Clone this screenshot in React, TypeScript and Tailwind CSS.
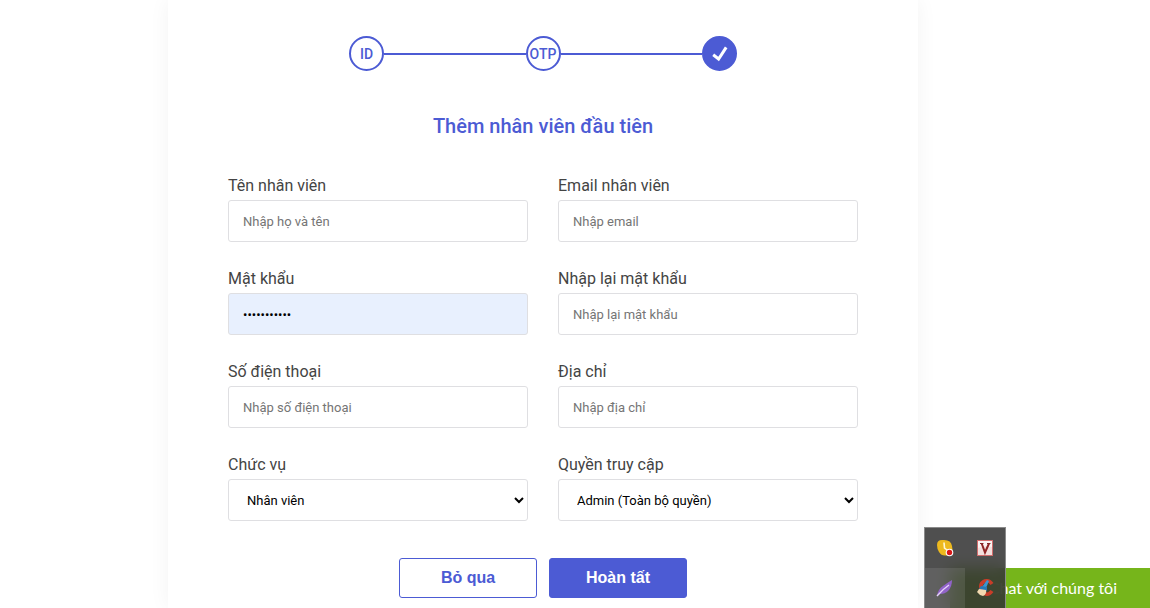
import { useState } from "react";

const inputClass =
  "h-[42px] w-full rounded-[3px] border border-[#dfdfe2] px-[14px] text-[13px] text-black placeholder:text-[#757575] focus:outline-none focus:border-[#4c5bd4]";

const labelClass = "mb-0.5 block text-base leading-6 text-[#444]";

const fields = [
  { id: "name", label: "Tên nhân viên", placeholder: "Nhập họ và tên", type: "text" },
  { id: "email", label: "Email nhân viên", placeholder: "Nhập email", type: "email" },
  { id: "password", label: "Mật khẩu", placeholder: "Nhập mật khẩu", type: "password" },
  { id: "confirm", label: "Nhập lại mật khẩu", placeholder: "Nhập lại mật khẩu", type: "password" },
  { id: "phone", label: "Số điện thoại", placeholder: "Nhập số điện thoại", type: "tel" },
  { id: "address", label: "Địa chỉ", placeholder: "Nhập địa chỉ", type: "text" },
];

const selects = [
  { id: "position", label: "Chức vụ", options: ["Nhân viên"] },
  { id: "role", label: "Quyền truy cập", options: ["Admin (Toàn bộ quyền)"] },
];

function Steps() {
  const circle =
    "flex size-[35px] shrink-0 items-center justify-center rounded-full border-2 border-[#4c5bd4] text-sm font-medium";
  return (
    <div className="mx-auto flex w-full max-w-[388px] items-center text-[#4c5bd4]">
      <div className={circle}>ID</div>
      <div className="h-0.5 flex-1 bg-[#4c5bd4]" />
      <div className={circle}>OTP</div>
      <div className="h-0.5 flex-1 bg-[#4c5bd4]" />
      <div className={`${circle} bg-[#4c5bd4]`}>
        <svg viewBox="0 0 16 16" className="size-4" fill="none" stroke="white" strokeWidth="3">
          <path d="M1.2 8.8 L6.6 13 L14.2 1.4" />
        </svg>
      </div>
    </div>
  );
}

function Tray() {
  return (
    <div className="fixed right-36 bottom-0 grid h-[81px] w-[82px] grid-cols-2 grid-rows-2 border border-b-0 border-[#8a8a8a] bg-[#323232]/86 backdrop-blur-sm">
      <div className="flex items-center justify-center">
        <svg viewBox="0 0 18 18" className="size-[18px]">
          <path
            d="M1 6 Q1 1 6 1 Q15 0 16 7 Q18 16 12 16 Q6 18 3 13 Q1 10 1 6Z"
            fill="#edb91e"
          />
          <path d="M8 3.5 L8.5 9 L11 11" fill="none" stroke="#fff7d5" strokeWidth="1.6" />
          <circle cx="13.5" cy="13.5" r="3.8" fill="#fff" />
          <circle cx="13.5" cy="13.5" r="2.7" fill="#d91818" />
        </svg>
      </div>
      <div className="flex items-center justify-center">
        <svg viewBox="0 0 16 16" className="size-4">
          <rect x="0.5" y="0.5" width="15" height="15" fill="#f3dfdd" stroke="#cf6c6c" />
          <path d="M1 1 H15 V7 Q8 5 1 8Z" fill="#fff" opacity="0.6" />
          <path d="M3 3.5 H6.5 M10 3.5 H13.5" stroke="#7d2929" strokeWidth="1" />
          <path d="M4.7 3.5 L8 12.5 L12 3.5" fill="none" stroke="#8f2424" strokeWidth="2" />
        </svg>
      </div>
      <div className="flex items-center justify-center bg-white/10">
        <svg viewBox="0 0 18 18" className="size-[18px]">
          <path d="M1 17 Q2 10 7 7 Q11 4 16 1 Q16 8 12 12 Q9 15 4 15Z" fill="#9163c9" />
          <path d="M1 17 Q7 10 13 6" fill="none" stroke="#e6d3fa" strokeWidth="1.4" />
        </svg>
      </div>
      <div className="flex items-center justify-center">
        <svg viewBox="0 0 18 18" className="size-[18px]">
          <path
            d="M16 5 Q13 1 9 2 Q4 4 5 9 Q6 15 10 15 Q13 16 16 12"
            fill="none"
            stroke="#c93d29"
            strokeWidth="3.6"
          />
          <path d="M11 1 L13 2 L10 9 L6 8Z" fill="#3a95cf" />
          <path d="M5 7 L11 8 L11 12 L3 10Z" fill="#2879b5" />
          <path d="M3 10 L10 11 Q11 15 7 17 Q3 16 1 13Z" fill="#f2d9b0" />
        </svg>
      </div>
    </div>
  );
}

export default function App() {
  const [values, setValues] = useState<Record<string, string>>({ password: "nhanvien123" });

  return (
    <div className="min-h-screen overflow-x-hidden bg-white pr-16 font-['Roboto',sans-serif]">
      <main className="mx-auto min-h-screen max-w-[750px] bg-white px-[60px] pt-9 pb-[10px] shadow-[0_0_20px_rgba(0,0,0,0.05)]">
        <Steps />
        <h1 className="mt-10 text-center text-xl leading-[30px] font-medium text-[#4c5bd4]">
          Thêm nhân viên đầu tiên
        </h1>

        <form onSubmit={(e) => e.preventDefault()}>
          <div className="mt-[33px] grid grid-cols-2 gap-x-[30px] gap-y-[25px]">
            {fields.map((field) => (
              <div key={field.id}>
                <label htmlFor={field.id} className={labelClass}>
                  {field.label}
                </label>
                <input
                  id={field.id}
                  type={field.type}
                  placeholder={field.placeholder}
                  value={values[field.id] ?? ""}
                  onChange={(e) => setValues({ ...values, [field.id]: e.target.value })}
                  className={`${inputClass} ${values[field.id] ? "bg-[#e8f0fe]" : "bg-white"}`}
                />
              </div>
            ))}
            {selects.map((select) => (
              <div key={select.id}>
                <label htmlFor={select.id} className={labelClass}>
                  {select.label}
                </label>
                <select id={select.id} className={`${inputClass} bg-white`}>
                  {select.options.map((option) => (
                    <option key={option}>{option}</option>
                  ))}
                </select>
              </div>
            ))}
          </div>

          <div className="mt-[37px] flex justify-center gap-3 font-['Liberation_Sans',Arial,sans-serif] text-base font-bold">
            <button
              type="button"
              className="h-10 w-[138px] rounded-[3px] border border-[#4c5bd4] bg-white text-[#4c5bd4]"
            >
              Bỏ qua
            </button>
            <button
              type="submit"
              className="h-10 w-[138px] rounded-[3px] border border-[#4c5bd4] bg-[#4c5bd4] text-white"
            >
              Hoàn tất
            </button>
          </div>
        </form>
      </main>

      <button
        type="button"
        className="fixed right-0 bottom-0 h-10 w-[200px] bg-[#76b51b] pr-[33px] text-right font-['Lato',sans-serif] text-base whitespace-nowrap text-white"
      >
        Chat với chúng tôi
      </button>
      <Tray />
    </div>
  );
}
